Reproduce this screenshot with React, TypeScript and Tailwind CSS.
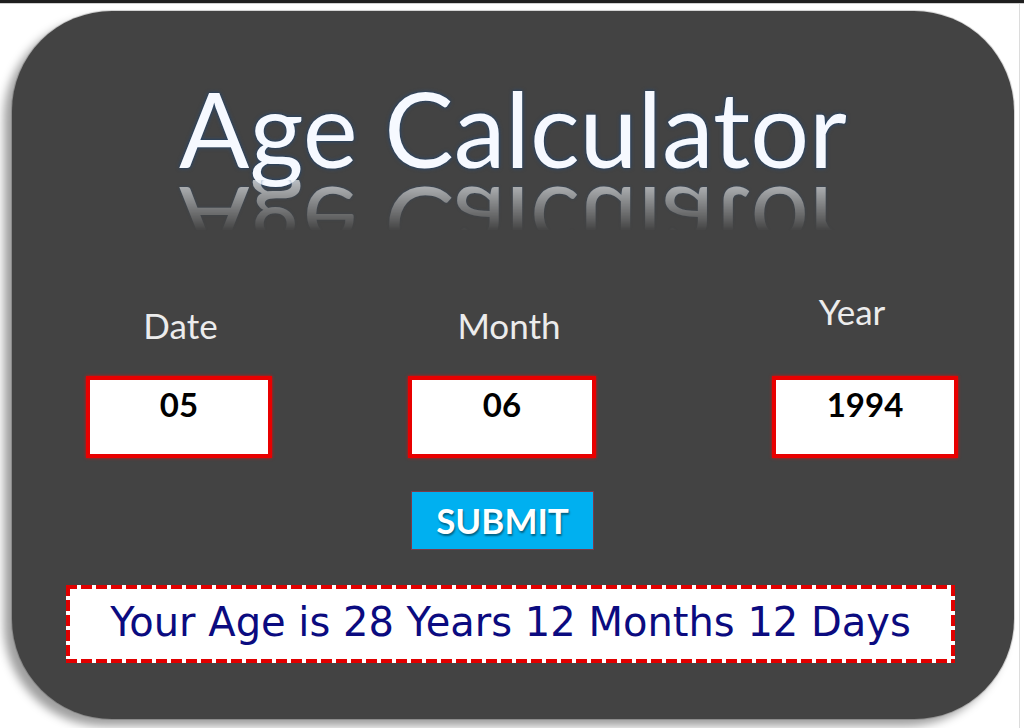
import React from 'react'

const LATO = "font-['Lato','Open_Sans',sans-serif]"

interface FieldProps {
  label: string
  value: string
  boxClass: string
  labelClass: string
}

function Field({ label, value, boxClass, labelClass }: FieldProps) {
  return (
    <div className={`flex flex-col ${boxClass}`}>
      <div className={`h-[40px] leading-[40px] text-center text-[35px] text-[#ececec] ${labelClass}`}>
        {label}
      </div>
      {/* Input box */}
      <div className="mt-[31px] h-[82px] border-4 border-[#e80000] bg-white shadow-[0_0_3px_rgba(255,0,0,0.8)]">
        <div className="pt-[4px] text-center text-[33px] font-bold leading-[40px] text-black">{value}</div>
      </div>
    </div>
  )
}

export default function App() {
  const title = 'Age Calculator'

  return (
    <div className={`flex h-[728px] w-[1024px] flex-col overflow-hidden bg-white ${LATO}`}>
      {/* Top strip */}
      <div className="h-[4px] shrink-0 border-b border-[#cfcfcf] bg-[#1f1f1f]" />

      <div className="mr-[4px] flex flex-1 border-r border-[#dcdcdc] pl-[12px] pt-[7px]">
        {/* Card */}
        <div className="flex h-[708px] w-[1002px] shrink-0 flex-col rounded-[100px] bg-[#434343] pt-[65px] shadow-[-8px_7px_10px_rgba(0,0,0,0.38),0_0_0_1px_rgba(200,200,200,0.7)]">
          {/* Title */}
          <div className="h-[104px] text-center text-[104px] leading-none text-[#f6f9ff] [text-shadow:0_0_2px_#1d3550,0_0_4px_rgba(40,80,130,0.9)]">
            {title}
          </div>
          {/* Reflection (mask hides the mirrored descenders) */}
          <div
            aria-hidden="true"
            className="h-[94px] -scale-y-100 text-center text-[104px] leading-[0.9] text-[#e8ecf0] [mask-image:linear-gradient(to_top,rgba(0,0,0,0.7)_2%,transparent_54%)] [text-shadow:0_0_3px_rgba(40,80,130,0.8)]"
          >
            {title}
          </div>

          {/* Date / Month / Year */}
          <div className="mt-[31px] flex items-start">
            <Field label="Date" value="05" boxClass="ml-[74px] w-[186px]" labelClass="pl-[3px]" />
            <Field label="Month" value="06" boxClass="ml-[136px] w-[188px]" labelClass="pl-[14px]" />
            <Field label="Year" value="1994" boxClass="ml-[176px] w-[186px]" labelClass="-mt-[14px] mb-[14px] pr-[26px]" />
          </div>

          {/* Submit */}
          <div className="mt-[33px] flex pl-[399px]">
            <button className="flex h-[59px] w-[183px] items-center justify-center border border-[#7a3b4a] bg-[#00b0f0] text-[35px] font-bold text-white [text-shadow:1px_2px_2px_rgba(0,0,0,0.45)]">
              SUBMIT
            </button>
          </div>

          {/* Result */}
          <div className="mt-[35px] flex pl-[54px]">
            <div className="flex h-[78px] w-[889px] items-center justify-center p-[4px] pb-[8px] [background:repeating-linear-gradient(90deg,#e00000_0_11px,#fff_11px_15px)_top_left/100%_4px_no-repeat,repeating-linear-gradient(90deg,#e00000_0_11px,#fff_11px_15px)_bottom_left/100%_4px_no-repeat,repeating-linear-gradient(180deg,#e00000_0_11px,#fff_11px_15px)_top_left/4px_100%_no-repeat,repeating-linear-gradient(180deg,#e00000_0_11px,#fff_11px_15px)_top_right/4px_100%_no-repeat,#fff]">
              <span className="font-['DejaVu_Sans','Verdana',sans-serif] text-[40px] leading-none text-[#0b0b80]">
                Your Age is 28 Years 12 Months 12 Days
              </span>
            </div>
          </div>
        </div>
      </div>
    </div>
  )
}
